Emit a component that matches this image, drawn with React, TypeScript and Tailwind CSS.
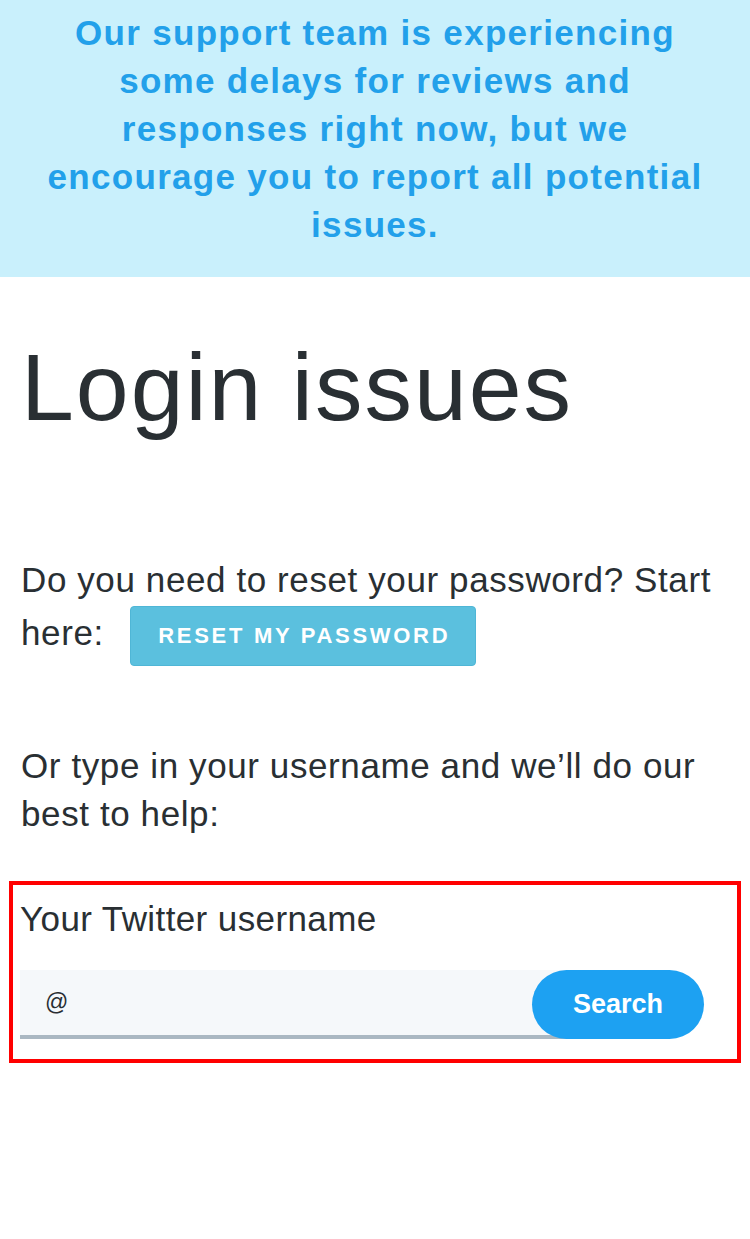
import React from 'react';

const sans = { fontFamily: '"Liberation Sans", Arial, sans-serif' };

export default function App() {
  return (
    <div className="min-h-[1239px] w-[750px] bg-white text-[#292f33]" style={sans}>
      {/* Notice banner */}
      <div className="bg-[#c9f0fc] pt-[9px] pb-[28px] text-center">
        <p className="text-[35px] font-bold leading-[48px] tracking-[1.3px] text-[#22a0ea]">
          Our support team is experiencing
          <br />
          some delays for reviews and
          <br />
          responses right now, but we
          <br />
          encourage you to report all potential
          <br />
          issues.
        </p>
      </div>

      <div className="px-[21px]">
        <h1 className="mt-[55px] text-[95px] leading-[110px] tracking-[2px]">Login issues</h1>

        <p className="mt-[114px] text-[35px] leading-[48px] tracking-[0.6px]">
          Do you need to reset your password? Start here:
          <button className="my-[2px] ml-[26px] inline-flex h-[60px] w-[346px] items-center justify-center rounded-[4px] border border-[#4fb6d6] bg-[#5bc0de] pl-[3px] align-middle text-[22px] font-bold tracking-[2.7px] text-white">
            RESET MY PASSWORD
          </button>
        </p>

        <p className="mt-[74px] text-[35px] leading-[48px] tracking-[0.6px]">
          Or type in your username and we’ll do our best to help:
        </p>
      </div>

      {/* Highlighted form */}
      <div className="mx-[9px] mt-[43px] h-[182px] border-[4px] border-[#ff0000] px-[7px] pt-[14px]">
        <label className="block text-[35px] leading-[40px] tracking-[0.4px]">Your Twitter username</label>
        <div className="mt-[31px] flex items-center pr-[26px]">
          <div className="flex h-[69px] flex-1 items-center border-b-[4px] border-[#aab8c2] bg-[#f5f8fa] pl-[25px] text-[23px]">
            @
          </div>
          <button className="-ml-[120px] h-[69px] w-[172px] shrink-0 rounded-full bg-[#1da1f2] text-[27px] font-bold text-white">
            Search
          </button>
        </div>
      </div>
    </div>
  );
}
